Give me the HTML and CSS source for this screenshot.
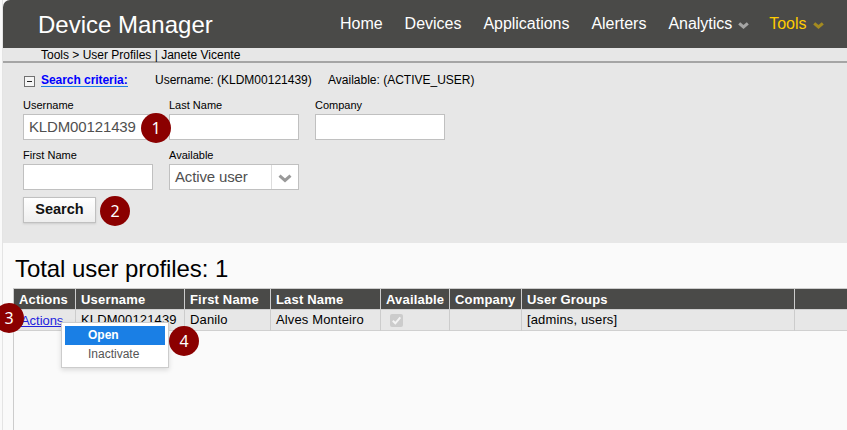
FILE: index.html
```
<!DOCTYPE html>
<html lang="en">
<head>
<meta charset="utf-8">
<title>Device Manager</title>
<link rel="stylesheet" href="styles.css">
</head>
<body>
<div class="app">
  <header class="header">
    <h1 class="brand">Device Manager</h1>
    <nav class="nav">
      <a>Home</a><a>Devices</a><a>Applications</a><a>Alerters</a>
      <a>Analytics<svg class="chev" viewBox="0 0 11 7"><path d="M1.2 1.3 5.5 5 9.800 1.300"/></svg></a>
      <a class="active">Tools<svg class="chev" viewBox="0 0 11 7"><path d="M1.2 1.3 5.5 5 9.800 1.300"/></svg></a>
    </nav>
  </header>
  <div class="crumbs">Tools &gt; User Profiles | Janete Vicente</div>
  <section class="search">
    <div class="criteria">
      <span class="toggle"></span>
      <a class="criteria-link">Search criteria:</a>
      <span class="crit-user">Username: (KLDM00121439)</span>
      <span class="crit-avail">Available: (ACTIVE_USER)</span>
    </div>
    <div class="fields">
      <div class="field"><label>Username</label><div class="input">KLDM00121439</div><span class="badge b1">1</span></div>
      <div class="field"><label>Last Name</label><div class="input"></div></div>
      <div class="field"><label>Company</label><div class="input"></div></div>
      <div class="field"><label>First Name</label><div class="input"></div></div>
      <div class="field"><label>Available</label><div class="input select"><span>Active user</span><i><svg viewBox="0 0 14 9"><path d="M1.500 1.700 7 6.500 12.500 1.700"/></svg></i></div></div>
    </div>
    <div class="actions"><button class="btn">Search</button><span class="badge b2">2</span></div>
  </section>
  <main class="results">
    <h2 class="total">Total user profiles: 1</h2>
    <div class="table">
      <div class="row head"><span>Actions</span><span>Username</span><span>First Name</span><span>Last Name</span><span>Available</span><span>Company</span><span>User Groups</span><span></span></div>
      <div class="row"><span class="act"><a>Actions</a></span><span>KLDM00121439</span><span>Danilo</span><span>Alves Monteiro</span><span class="check"><svg viewBox="0 0 13 13"><rect width="13" height="13" rx="2"/><path d="M2.800 6.800 5.300 9.300 10.300 3.300"/></svg></span><span></span><span>[admins, users]</span><span></span></div>
      <div class="menu"><div class="item sel">Open</div><div class="item">Inactivate</div></div>
      <span class="badge b3">3</span>
      <span class="badge b4">4</span>
    </div>
  </main>
</div>
</body>
</html>
```
FILE: styles.css
```
* { box-sizing: border-box; }
body { margin: 0; background: #fafafa; font-family: "Liberation Sans", Arial, sans-serif; color: #000; overflow: hidden; }
.app { margin-left: 2px; border-left: 1px solid #e4e4e4; height: 430px; display: flex; flex-direction: column; }
.header { height: 48px; background: #4a4a48; border-top-left-radius: 7px; display: flex; align-items: center; padding-left: 35px; color: #fff; flex: none; }
.brand { margin: 2px 0 0; font-size: 24px; font-weight: 400; width: 302px; line-height: 28px; }
.nav { display: flex; gap: 22px; font-size: 16px; line-height: 20px; white-space: nowrap; letter-spacing: -0.02px; }
.nav a { display: flex; align-items: center; }
.chev { width: 11px; height: 7px; margin: 3px 0 0 6px; fill: none; stroke: #a5a5a4; stroke-width: 3; }
.nav .active { color: #fc0; margin-left: -2px; }
.active .chev { stroke: #a38a20; }
.crumbs { height: 15px; flex: none; background: #e7e7e7; border-bottom: 2px solid #a5a5a5; padding-left: 38px; font-size: 12px; line-height: 14px; }
.search { height: 180px; flex: none; background: #e7e7e7; padding: 9px 0 0 20px; }
.criteria { display: flex; align-items: center; height: 16px; font-size: 12px; line-height: 16px; white-space: nowrap; }
.toggle { width: 11px; height: 11px; border: 1px solid #707070; background: #f5f5f5; margin: 3px 6px 0 1px; display: grid; place-items: center; }
.toggle::after { content: ""; width: 5px; height: 1px; background: #222; }
.criteria-link { color: #00f; font-weight: 700; line-height: 14px; height: 14px; border-bottom: 1px solid #1a7fe5; width: 87px; letter-spacing: -0.05px; }
.crit-user { margin-left: 27px; width: 173px; }
.fields { display: grid; grid-template-columns: repeat(3, 130px); column-gap: 16px; row-gap: 10px; margin-top: 10px; }
.field { position: relative; height: 40px; }
.field label { display: block; font-size: 11px; line-height: 14px; height: 16px; }
.input { height: 26px; border: 1px solid #c0c0c0; background: #fff; font-size: 15px; line-height: 24px; padding-left: 5px; color: #505050; letter-spacing: -0.14px; }
.select { display: flex; justify-content: space-between; }
.select i { width: 27px; border-left: 1px solid #ddd; display: grid; place-items: center; }
.select svg { width: 14px; height: 9px; fill: none; stroke: #999; stroke-width: 3; margin-top: 2px; }
.actions { margin-top: 9px; position: relative; }
.btn { display: block; width: 73px; height: 26px; border: 1px solid #c0c0c0; background: linear-gradient(#fff, #eee); font: 700 14.5px/22px "Liberation Sans", Arial, sans-serif; padding: 0 0 2px; color: #111; box-shadow: 0 1px 2px #ccc; }
.badge { position: absolute; z-index: 3; width: 30px; height: 30px; border-radius: 50%; background: #8b0000; color: #fff; font: 16px/30px "Noto Sans", sans-serif; text-align: center; letter-spacing: 0; }
.b1 { left: 118px; top: 15px; }
.b2 { left: 77px; top: -1px; }
.b3 { left: -20px; top: 13.500px; }
.b4 { left: 155px; top: 36.500px; }
.results { flex: 1; padding-left: 10px; }
.total { margin: 12px 0 0; padding-left: 2px; font-size: 24px; font-weight: 400; line-height: 28px; height: 33px; letter-spacing: -0.07px; }
.table { position: relative; height: 142px; border: 1px solid #ccc; border-right: 0; border-bottom: 0; font-size: 13px; }
.row { display: grid; grid-template-columns: 62px 109px 86px 110px 69px 72px 273px 1fr; height: 21px; border-bottom: 1px solid #d0d0d0; background: #e7e7e7; line-height: 20px; white-space: nowrap; letter-spacing: 0.14px; }
.row > span { padding-left: 5px; border-right: 1px solid #ccc; }
.row > span:last-child { border-right: 0; }
.head { background: #4a4a48; color: #fff; font-weight: 700; line-height: 21px; letter-spacing: 0.18px; }
.act a { color: #22d; text-decoration: underline; display: block; padding: 1px 0 0 2px; letter-spacing: -0.05px; }
.check svg { width: 13px; height: 13px; margin: 4px 0 0 4px; display: block; fill: #ccc; }
.check path { fill: none; stroke: #f4f4f4; stroke-width: 2; }
.menu { position: absolute; left: 47px; top: 33px; width: 108px; height: 46px; border: 1px solid #ccc; background: #fff; padding: 3px; font-size: 12px; box-shadow: 0 2px 5px #0002; z-index: 2; }
.item { height: 19px; line-height: 19px; padding-left: 23px; color: #555; }
.sel { background: #1a7fe5; color: #fff; font-weight: 700; }
```
